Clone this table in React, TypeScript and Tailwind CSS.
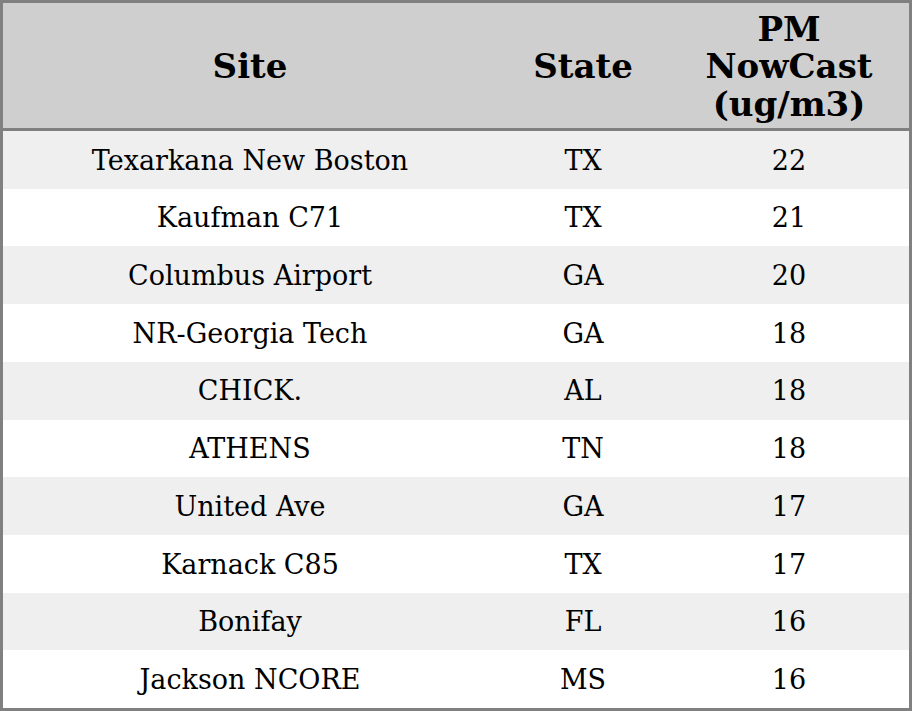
const rows = [
  { site: "Texarkana New Boston", state: "TX", pm: 22 },
  { site: "Kaufman C71", state: "TX", pm: 21 },
  { site: "Columbus Airport", state: "GA", pm: 20 },
  { site: "NR-Georgia Tech", state: "GA", pm: 18 },
  { site: "CHICK.", state: "AL", pm: 18 },
  { site: "ATHENS", state: "TN", pm: 18 },
  { site: "United Ave", state: "GA", pm: 17 },
  { site: "Karnack C85", state: "TX", pm: 17 },
  { site: "Bonifay", state: "FL", pm: 16 },
  { site: "Jackson NCORE", state: "MS", pm: 16 },
];

export default function App() {
  return (
    <div
      className="w-[912px] h-[711px] flex flex-col border-[3px] border-[#808080] bg-white text-black"
      style={{ fontFamily: '"DejaVu Serif", serif' }}
    >
      <div className="h-[128px] shrink-0 grid grid-cols-[494px_172px_1fr] bg-[#cfcfcf] border-b-[3px] border-[#808080] pt-[3px] text-[34px] font-bold leading-[37.5px]">
        <div className="flex items-center justify-center">Site</div>
        <div className="flex items-center justify-center">State</div>
        <div className="flex items-center justify-center text-center">
          PM
          <br />
          NowCast
          <br />
          (ug/m3)
        </div>
      </div>
      <div className="flex-1 flex flex-col text-[27px]">
        {rows.map((r, i) => (
          <div
            key={i}
            className={`flex-1 grid grid-cols-[494px_172px_1fr] items-center pt-[2px] ${
              i % 2 === 0 ? "bg-[#efefef]" : "bg-white"
            }`}
          >
            <div className="text-center">{r.site}</div>
            <div className="text-center">{r.state}</div>
            <div className="text-center">{r.pm}</div>
          </div>
        ))}
      </div>
    </div>
  );
}
